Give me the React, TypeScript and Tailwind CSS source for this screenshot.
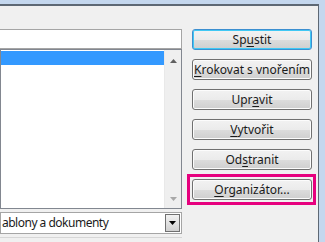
// Makra dialog — cropped view of the macro dialog with its command buttons.

const font = "font-['Segoe_UI','Noto_Sans',sans-serif]";

interface DialogButtonProps {
  before: string;
  hotkey: string;
  after: string;
  focused?: boolean;
  highlighted?: boolean;
}

function DialogButton({ before, hotkey, after, focused, highlighted }: DialogButtonProps) {
  return (
    <div className="relative">
      {highlighted && (
        <div className="absolute -left-[5px] -right-[4px] -top-[5px] -bottom-[5px] border-[3px] border-[#e6007e]" />
      )}
      <button
        className={`relative flex h-[21px] w-[120px] items-center justify-center rounded-[3px] border bg-[linear-gradient(#f2f2f2_0%,#ebebeb_50%,#dddddd_51%,#cfcfcf_100%)] text-[12px] leading-none text-[#1a1a1a] ${
          focused
            ? "border-[#3c8fd0] shadow-[inset_0_0_0_1px_#40c8f4]"
            : "border-[#707070] shadow-[inset_0_0_0_1px_#fcfcfc]"
        }`}
      >
        <span>
          {before}
          <span className="underline underline-offset-[2px]">{hotkey}</span>
          {after}
        </span>
      </button>
    </div>
  );
}

function ScrollArrow({ down }: { down?: boolean }) {
  return (
    <svg width="7" height="4" viewBox="0 0 7 4" className="block">
      {down ? (
        <path d="M0 0h7L3.5 4z" fill="#a8a8a8" />
      ) : (
        <path d="M0 4h7L3.5 0z" fill="#606060" />
      )}
    </svg>
  );
}

export default function App() {
  return (
    <div className={`h-[242px] w-[325px] overflow-hidden bg-[#c4d7ee] pt-[4px] pr-[6px] ${font}`}>
      <div className="flex h-full border-t-2 border-r border-t-[#5d6874] border-r-[#5d6874] bg-[#f0f0f0]">
        {/* Left: name field, macro list, scope combo */}
        <div className="flex w-[182px] flex-col pt-[23px]">
          <div className="h-[20px] border border-l-0 border-[#a5a5a5] bg-white" />
          <div className="flex h-[160px] border border-[#828790] bg-white">
            <div className="flex-1 pt-[1px]">
              <div className="h-[14px] bg-[#3399ff]" />
            </div>
            <div className="flex w-[17px] flex-col items-center justify-between border-l border-[#e9e9e9] bg-[#efefef] pt-[9px] pb-[7px]">
              <ScrollArrow />
              <ScrollArrow down />
            </div>
          </div>
          <div className="mt-[3px] flex h-[22px] items-center border border-[#a5a5a5] bg-white pl-[1px]">
            <span className="flex-1 text-[12px] tracking-[-0.5px] text-[#1a1a1a]">ablony a dokumenty</span>
            <div className="mr-[1px] flex h-[18px] w-[15px] items-center justify-center border border-[#707070] bg-[linear-gradient(#f2f2f2,#d0d0d0)]">
              <svg width="7" height="4" viewBox="0 0 7 4">
                <path d="M0 0h7L3.5 4z" fill="#000" />
              </svg>
            </div>
          </div>
          <div className="mt-[3px] border-t border-[#d6d6d6]" />
        </div>

        {/* Right: command buttons */}
        <div className="ml-[10px] flex flex-col gap-[9px] pt-[23px]">
          <DialogButton before="Sp" hotkey="u" after="stit" focused />
          <DialogButton before="" hotkey="K" after="rokovat s vnořením" />
          <DialogButton before="Upr" hotkey="a" after="vit" />
          <DialogButton before="" hotkey="V" after="ytvořit" />
          <DialogButton before="Od" hotkey="s" after="tranit" />
          <DialogButton before="" hotkey="O" after="rganizátor..." highlighted />
        </div>
      </div>
    </div>
  );
}
